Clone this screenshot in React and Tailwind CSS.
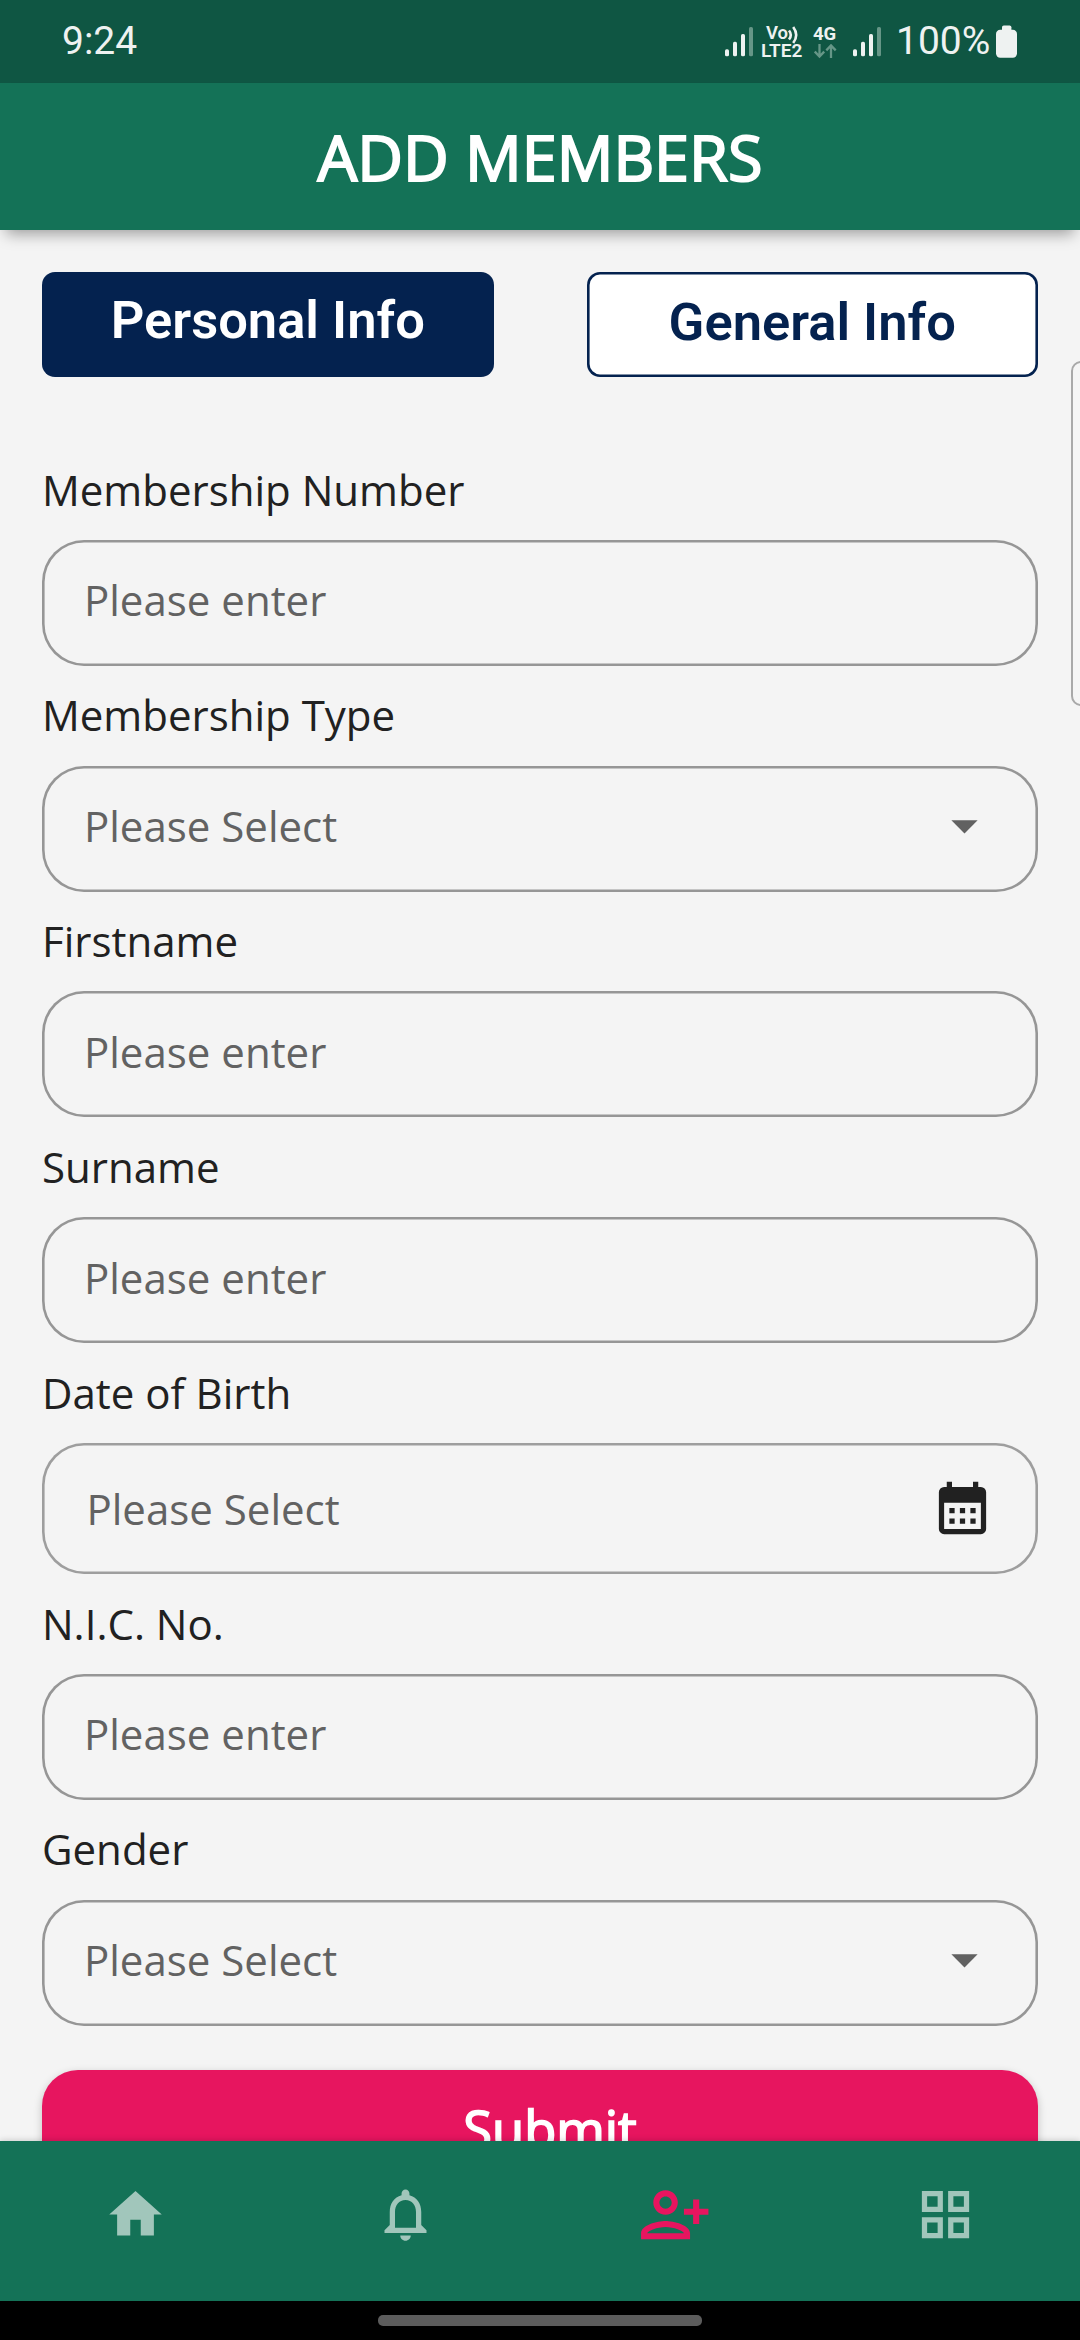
const fields = [
  { label: "Membership Number", kind: "text" },
  { label: "Membership Type", kind: "select" },
  { label: "Firstname", kind: "text" },
  { label: "Surname", kind: "text" },
  { label: "Date of Birth", kind: "date" },
  { label: "N.I.C. No.", kind: "text" },
  { label: "Gender", kind: "select" },
];

function Signal() {
  return (
    <svg width="28" height="30" viewBox="0 0 28 30" fill="#eef2f1">
      <rect x="0" y="22.3" width="4" height="7" rx="1.6" />
      <rect x="8" y="14.7" width="4" height="14.6" rx="1.6" />
      <rect x="16" y="7" width="4" height="22.3" rx="1.6" />
      <rect x="24" y="0" width="4" height="29.3" rx="1.6" fill="#669687" />
    </svg>
  );
}

function StatusBar() {
  return (
    <div className="flex h-[83px] shrink-0 items-start bg-[#0f5643] pt-[27px] pl-[62px] font-[Roboto,sans-serif] text-[#eef2f1]">
      <span className="-mt-[9px] w-[80px] text-[39px] leading-[46px]">9:24</span>
      <div className="ml-[583px] flex items-start">
        <Signal />
        <div className="ml-[8px] flex w-[42px] flex-col text-[18.5px] leading-[18px] font-semibold">
          <div className="-mt-[3px] flex pl-[5px]">
            <span className="w-[22px]">Vo</span>
            <svg className="mt-[2px]" width="11" height="18" viewBox="0 0 11 18" fill="none" stroke="#eef2f1" strokeWidth="2.6">
              <path d="M1 4.5Q4.6 9 1 13.5" />
              <path d="M5.2 1Q11.2 9 5.2 17" />
            </svg>
          </div>
          <span className="-mt-[3px] text-[19px] leading-[20px]">LTE2</span>
        </div>
        <div className="ml-[10px] flex w-[24px] flex-col">
          <span className="-mt-[2px] text-[18.5px] leading-[18px] font-bold">4G</span>
          <svg className="mt-px ml-px" width="23" height="15" viewBox="0 0 23 15" fill="none" stroke="#669687" strokeWidth="2.3">
            <path d="M5.5 0V12.5M.8 7.6L5.5 12.6L10.2 7.6M17 14V1.5M12.3 6.4L17 1.4L21.7 6.4" />
          </svg>
        </div>
        <div className="ml-[16px]">
          <Signal />
        </div>
        <span className="-mt-[9px] ml-[15px] w-[97px] text-[39px] leading-[46px]">100%</span>
        <svg className="-mt-[2px] ml-[3px]" width="21" height="33" viewBox="0 0 21 33" fill="#eef2f1">
          <rect x="6" y="0.4" width="9.4" height="8" rx="1.8" />
          <rect x="0" y="4.8" width="21" height="28" rx="4.2" />
        </svg>
      </div>
    </div>
  );
}

function Caret() {
  return (
    <svg className="mr-[42px]" width="63" height="63" viewBox="0 0 24 24" fill="#616161">
      <path d="M7 10l5 5 5-5z" />
    </svg>
  );
}

function CalendarIcon() {
  return (
    <svg className="mt-[5px] mr-[44.5px]" width="63" height="63" viewBox="0 0 24 24" fill="#212121">
      <path
        fillRule="evenodd"
        d="M19 3h-1V1h-2v2H8V1H6v2H5a2 2 0 0 0-2 2v14a2 2 0 0 0 2 2h14a2 2 0 0 0 2-2V5a2 2 0 0 0-2-2zM19 19H5V9h14z"
      />
      <path d="M7 11h2v2H7zM11 11h2v2h-2zM15 11h2v2h-2zM7 15h2v2H7zM11 15h2v2h-2zM15 15h2v2h-2z" />
    </svg>
  );
}

function Field({ label, kind }) {
  const date = kind === "date";
  return (
    <div className="font-['Open_Sans',sans-serif] text-[42px] leading-[57.75px]">
      <div className="pt-[20.5px] pb-[21.5px] text-[#212121]">{label}</div>
      <div
        className={
          date
            ? "flex h-[131.25px] items-center justify-between rounded-[42px] pl-[44.5px] text-[#626262] shadow-[inset_0_0_0_2.6px_#9e9e9e]"
            : "flex h-[126px] items-center justify-between rounded-[42px] pb-[5.25px] pl-[42px] text-[#626262] shadow-[inset_0_0_0_2.6px_#969696]"
        }
      >
        <span>{kind === "text" ? "Please enter" : "Please Select"}</span>
        {kind === "select" && <Caret />}
        {date && <CalendarIcon />}
      </div>
    </div>
  );
}

const navItems = [
  { name: "Home", size: 63, color: "#a1c6bb", d: "M10 20v-6h4v6h5v-8h3L12 3 2 12h3v8z" },
  {
    name: "Notifications",
    size: 63,
    color: "#a1c6bb",
    d: "M12 22c1.1 0 2-.9 2-2h-4c0 1.1.9 2 2 2zm6-6v-5c0-3.07-1.63-5.64-4.5-6.32V4c0-.83-.67-1.5-1.5-1.5s-1.5.67-1.5 1.5v.68C7.64 5.36 6 7.92 6 11v5l-2 2v1h16v-1l-2-2zm-2 1H8v-6c0-2.48 1.51-4.5 4-4.5s4 2.02 4 4.5v6z",
  },
  {
    name: "Add member",
    size: 73.5,
    color: "#e7155f",
    d: "M20 10V7h-2v3h-3v2h3v3h2v-3h3v-2zM9 12c2.21 0 4-1.79 4-4s-1.79-4-4-4-4 1.79-4 4 1.79 4 4 4zm0-6c1.1 0 2 .9 2 2s-.9 2-2 2-2-.9-2-2 .9-2 2-2zM9 14c-2.67 0-8 1.34-8 4v2h16v-2c0-2.66-5.33-4-8-4zm-6 4c.22-.72 3.31-2 6-2 2.7 0 5.8 1.29 6 2z",
  },
  {
    name: "More",
    size: 63,
    color: "#a1c6bb",
    d: "M3 3v8h8V3H3zm6 6H5V5h4v4zm-6 4v8h8v-8H3zm6 6H5v-4h4v4zm4-16v8h8V3h-8zm6 6h-4V5h4v4zm-6 4v8h8v-8h-8zm6 6h-4v-4h4v4z",
  },
];

export default function App() {
  return (
    <div className="relative flex h-[2340px] w-[1080px] flex-col overflow-hidden bg-[#f4f4f4]">
      <StatusBar />
      <header className="relative z-10 flex h-[147px] shrink-0 items-center justify-center bg-[#147257] pt-px shadow-[0_10px_14px_-6px_rgba(0,0,0,0.36)]">
        <h1 className="font-['Open_Sans',sans-serif] text-[63px] leading-[86px] text-white [-webkit-text-stroke:2px_white]">
          ADD MEMBERS
        </h1>
      </header>

      <main className="flex min-h-0 flex-1 flex-col overflow-hidden px-[42px] pt-[42px]">
        <div className="flex shrink-0 justify-between font-[Roboto,sans-serif] text-[52.5px] leading-[62px] font-semibold">
          <button className="h-[105px] w-[451.5px] rounded-[13px] bg-[#04224f] pb-[10px] text-white">Personal Info</button>
          <button className="h-[105px] w-[451.5px] rounded-[13px] bg-white pb-[6px] text-[#04224f] shadow-[inset_0_0_0_2.6px_#04224f]">
            General Info
          </button>
        </div>
        <form className="mt-[63px] shrink-0">
          {fields.map((f) => (
            <Field key={f.label} label={f.label} kind={f.kind} />
          ))}
          <button
            type="button"
            className="mt-[44.5px] h-[131px] w-full rounded-[36px] bg-[#e7155f] pb-[13px] pl-[20px] font-['Open_Sans',sans-serif] text-[52.5px] leading-[72px] text-white shadow-[0_3px_8px_rgba(0,0,0,0.22)] [-webkit-text-stroke:1.7px_white]"
          >
            Submit
          </button>
        </form>
      </main>

      <nav className="relative z-10 grid h-[160px] shrink-0 grid-cols-4 place-items-center bg-[#147257] pb-[13px] shadow-[0_-1px_6px_rgba(0,0,0,0.16)]">
        {navItems.map((n) => (
          <svg key={n.name} aria-label={n.name} width={n.size} height={n.size} viewBox="0 0 24 24" fill={n.color}>
            <path d={n.d} />
          </svg>
        ))}
      </nav>
      <div className="flex h-[39px] shrink-0 justify-center bg-black pt-[14px]">
        <div className="h-[11px] w-[324px] rounded-[5px] bg-[#5c5c5c]" />
      </div>

      {/* edge panel handle, floating over the right side of the screen */}
      <div className="absolute top-[361px] -right-[12px] h-[345px] w-[21px] rounded-[10px] border-2 border-[#a9a9a9] bg-[#f5f5f5]" />
    </div>
  );
}
